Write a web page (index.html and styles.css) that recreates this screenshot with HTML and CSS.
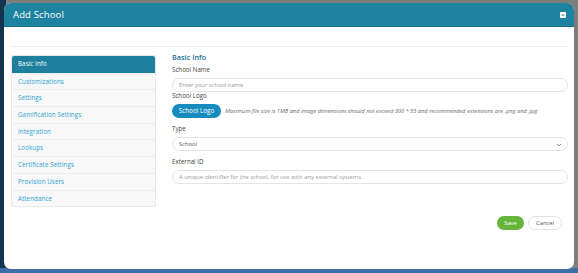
FILE: index.html
```html
<!DOCTYPE html>
<html>
<head>
<meta charset="utf-8">
<link rel="stylesheet" href="styles.css">
</head>
<body>
<div class="modal">
  <div class="modal-header">
    <span class="modal-title">Add School</span>
    <span class="close">×</span>
  </div>
  <div class="modal-body">
    <div class="divider"></div>
    <div class="content">
      <ul class="tabs">
        <li class="tab active">Basic Info</li>
        <li class="tab">Customizations</li>
        <li class="tab">Settings</li>
        <li class="tab">Gamification Settings</li>
        <li class="tab">Integration</li>
        <li class="tab">Lookups</li>
        <li class="tab">Certificate Settings</li>
        <li class="tab">Provision Users</li>
        <li class="tab">Attendance</li>
      </ul>
      <div class="form">
        <div class="section-title">Basic Info</div>
        <label class="label first">School Name</label>
        <div class="input placeholder">Enter your school name</div>
        <label class="label logo-label">School Logo</label>
        <div class="logo-row">
          <span class="btn-logo">School Logo</span>
          <span class="hint">Maximum file size is 1MB and image dimensions should not exceed 300 * 55 and recommended extensions are .png and .jpg</span>
        </div>
        <label class="label">Type</label>
        <div class="input select">School
          <svg class="chev" width="6" height="4" viewBox="0 0 6 4"><path d="M1 1 L3 3 L5 1" fill="none" stroke="#888" stroke-width="0.9"/></svg>
        </div>
        <label class="label">External ID</label>
        <div class="input placeholder">A unique identifier for the school, for use with any external systems</div>
        <div class="actions">
          <span class="btn-save">Save</span>
          <span class="btn-cancel">Cancel</span>
        </div>
      </div>
    </div>
  </div>
</div>
</body>
</html>
```

FILE: styles.css
```css
* { box-sizing: border-box; margin: 0; padding: 0; }
html, body { width: 578px; height: 273px; overflow: hidden; }
body {
  background:
    linear-gradient(to bottom, transparent 268px, #3d6fa6 268px),
    linear-gradient(to right, #14344f 0, #14344f 6px, #7d7d7d 6px);
  padding: 3px 4px 0 4px;
  font-family: "Open Sans", "Liberation Sans", sans-serif;
}
.modal {
  width: 570px;
  height: 266px;
  background: #fff;
  border-radius: 7px;
  overflow: hidden;
  display: flex;
  flex-direction: column;
}
.modal-header {
  height: 24px;
  background: #1e82a1;
  border-bottom: 1px solid #17708c;
  display: flex;
  align-items: center;
  justify-content: space-between;
  padding: 0 8px 0 9px;
  color: #fff;
}
.modal-title { font-size: 9.5px; letter-spacing: 0.15px; }
.close {
  width: 6px; height: 6px; background: #fff; border-radius: 1px;
  color: #1e82a1; font-size: 6px; line-height: 6px; text-align: center; font-weight: 700;
}
.modal-body { padding: 0 6px 0 7px; flex: 1; }
.divider { height: 20px; border-bottom: 1px solid #ececec; margin-bottom: 8px; }
.content { display: flex; align-items: flex-start; }
.tabs {
  list-style: none;
  width: 145px;
  border: 1px solid #e8e8e8;
  border-radius: 2px;
  background: #f8f8f8;
}
.tab {
  height: 16.7px;
  line-height: 16px;
  padding-left: 6px;
  font-size: 6.2px;
  color: #2c9fcf;
  border-top: 1px solid #ececec;
  letter-spacing: 0.1px;
}
.tab:first-child { border-top: none; }
.tab.active { background: #1f7f9e; color: #fff; border-radius: 2px 2px 0 0; }
.form { flex: 1; padding-left: 16px; display: flex; flex-direction: column; }
.section-title { font-size: 7.3px; font-weight: 600; color: #236f99; margin-top: -4px; height: 13px; line-height: 13px; }
.label { font-size: 6.2px; color: #444; height: 10px; line-height: 10px; display: block; margin-bottom: 3px; }
.label.first { margin-top: 1px; }
.label.logo-label { height: 8px; line-height: 8px; margin-bottom: 4px; }
.input {
  height: 14px;
  border: 1px solid #e4e4e4;
  border-radius: 7px;
  font-size: 5.8px;
  line-height: 12px;
  padding-left: 6px;
  color: #555;
  position: relative;
}
.input.placeholder { color: #9a9a9a; }
.select { margin-bottom: 6px; }
.chev { position: absolute; right: 5px; top: 5px; }
.logo-row { display: flex; align-items: center; height: 14px; margin-bottom: 6px; }
.btn-logo {
  background: #168bbd; color: #fff; font-size: 6.3px;
  height: 14px; line-height: 14px; border-radius: 7px;
  width: 49px; text-align: center;
}
.hint { font-size: 5.7px; font-style: italic; color: #6a6a6a; margin-left: 4px; white-space: nowrap; }
.actions { display: flex; justify-content: flex-end; gap: 4px; margin-top: 32px; padding-right: 6px; }
.btn-save {
  background: #66b43a; color: #fff; font-size: 5.8px; height: 14px; line-height: 14px;
  width: 27px; text-align: center; border-radius: 7px;
}
.btn-cancel {
  border: 1px solid #e2e2e2; color: #555; font-size: 5.8px; height: 14px; line-height: 12px;
  width: 34px; text-align: center; border-radius: 7px;
}
```
